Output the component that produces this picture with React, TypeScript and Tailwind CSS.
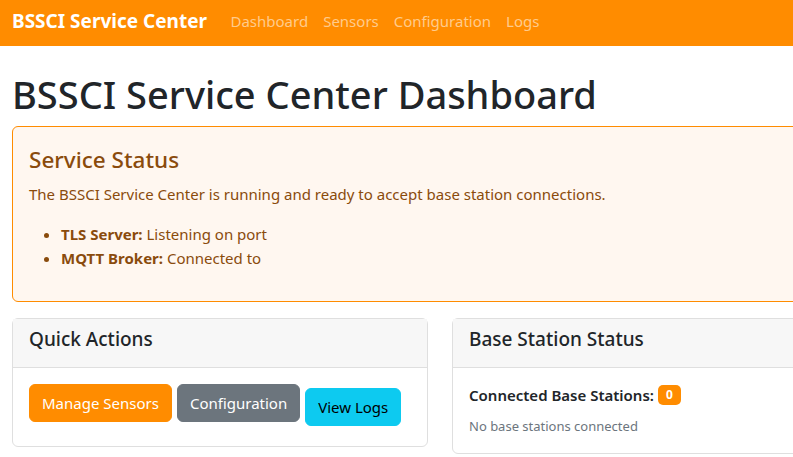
import React from "react";

const font = { fontFamily: '"Noto Sans", "Open Sans", sans-serif' };

function NavBar() {
  const links = ["Dashboard", "Sensors", "Configuration", "Logs"];
  return (
    <nav className="flex h-[46px] w-[880px] items-center bg-[#ff8c00] px-3 pb-1">
      <span className="mr-4 text-[19px] font-bold text-white">BSSCI Service Center</span>
      <ul className="flex gap-[-1px]">
        {links.map((l) => (
          <li key={l} className="px-[7.5px] text-[15px] text-[#ffcb8c]">
            {l}
          </li>
        ))}
      </ul>
    </nav>
  );
}

const btn = "whitespace-nowrap rounded-md border px-3 py-[6px] text-[15px] leading-6";

export default function App() {
  return (
    <div className="h-[457px] w-[793px] overflow-hidden bg-white text-[#212529]" style={font}>
      <NavBar />
      <main className="w-[880px] px-3 pt-6">
        <h1 className="mb-2 text-[38px] font-medium leading-[48px]">BSSCI Service Center Dashboard</h1>

        <div className="mb-4 rounded-md border border-[#ff8c00] bg-[#fff7f0] px-4 pt-[18px] pb-[15px] text-[#8a4b0c]">
          <h4 className="mb-2 text-[22.5px] font-medium leading-[29px]">Service Status</h4>
          <p className="mb-4 text-[15px] leading-6">
            The BSSCI Service Center is running and ready to accept base station connections.
          </p>
          <ul className="mb-4 list-disc pl-8 text-[15px] leading-6">
            <li>
              <strong className="font-bold">TLS Server:</strong> Listening on port
            </li>
            <li>
              <strong className="font-bold">MQTT Broker:</strong> Connected to
            </li>
          </ul>
        </div>

        <div className="-mx-3 flex items-start">
          <div className="w-1/2 px-3">
            <div className="rounded-md border border-[#dfdfdf]">
              <div className="border-b border-[#dfdfdf] bg-[#f7f7f7] px-4 py-2">
                <h5 className="mb-2 text-[19px] font-medium leading-6">Quick Actions</h5>
              </div>
              <div className="flex items-start gap-[5px] px-4 pt-4 pb-5">
                <button className={`${btn} border-[#ff8c00] bg-[#ff8c00] text-white`}>Manage Sensors</button>
                <button className={`${btn} border-[#6c757d] bg-[#6c757d] text-white`}>Configuration</button>
                <button className={`${btn} mt-1 border-[#0dcaf0] bg-[#0dcaf0] text-black`}>View Logs</button>
              </div>
            </div>
          </div>
          <div className="w-1/2 px-3">
            <div className="rounded-md border border-[#dfdfdf]">
              <div className="border-b border-[#dfdfdf] bg-[#f7f7f7] px-4 py-2">
                <h5 className="mb-2 text-[19px] font-medium leading-6">Base Station Status</h5>
              </div>
              <div className="p-4">
                <p className="mb-[10px] flex h-[22px] items-center text-[15px] font-semibold">
                  Connected Base Stations:
                  <span className="ml-[4px] rounded-[5px] bg-[#ff8c00] px-2 py-1 text-[12px] font-bold leading-3 text-white">
                    0
                  </span>
                </p>
                <small className="block text-[13px] leading-[21px] text-[#6c757d]">No base stations connected</small>
              </div>
            </div>
          </div>
        </div>
      </main>
    </div>
  );
}
